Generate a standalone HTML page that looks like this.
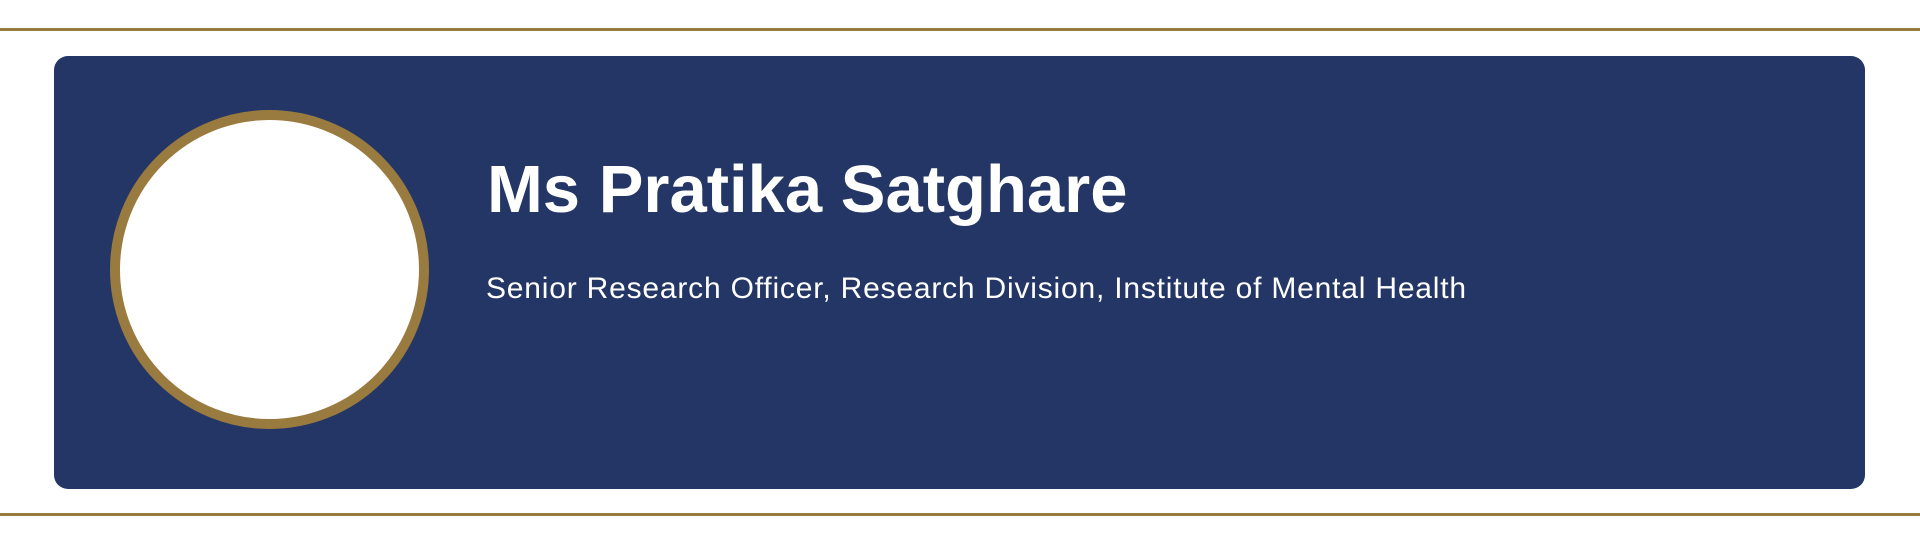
<!DOCTYPE html>
<html><head><meta charset="utf-8"><style>
html,body{margin:0;padding:0;background:#fff;width:1920px;height:540px;overflow:hidden;font-family:"Liberation Sans",sans-serif}
.line{position:absolute;left:0;width:1920px;height:3px;background:#9a7b3f}
.card{position:absolute;left:54px;top:56px;width:1811px;height:433px;background:#243665;border-radius:14px}
.circ{position:absolute;left:110px;top:110px;width:299px;height:299px;border:10px solid #9a7b3f;border-radius:50%;background:#fff}
.name{position:absolute;left:487px;top:151px;color:#fff;font-weight:bold;font-size:67px;white-space:nowrap}
.sub{position:absolute;left:486px;top:272px;color:#fff;font-size:30px;letter-spacing:0.8px;white-space:nowrap}
</style></head><body>
<div class="line" style="top:28px"></div>
<div class="card"></div>
<div class="circ"></div>
<div class="name">Ms Pratika Satghare</div>
<div class="sub">Senior Research Officer, Research Division, Institute of Mental Health</div>
<div class="line" style="top:513px"></div>
</body></html>
